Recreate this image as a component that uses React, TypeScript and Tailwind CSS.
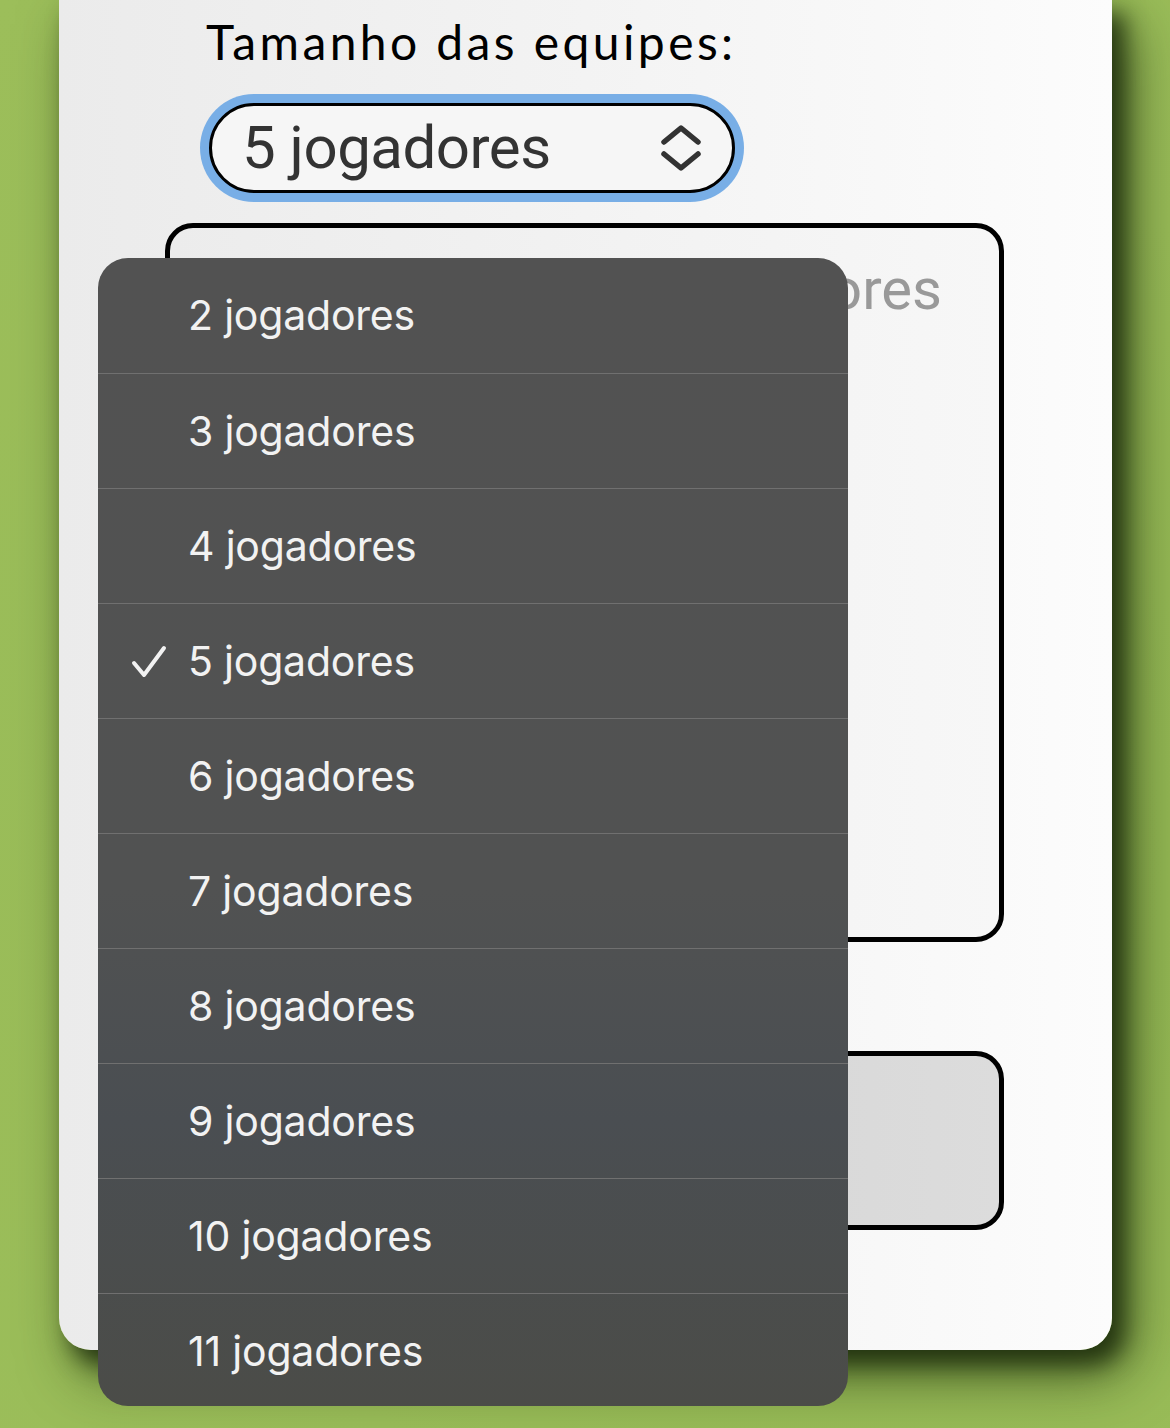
import React from "react";

const options = [2, 3, 4, 5, 6, 7, 8, 9, 10, 11];

function UpDown() {
  return (
    <svg width="42" height="50" viewBox="0 0 42 50" fill="none">
      <path d="M4 19 L21 5 L38 19" stroke="#333" strokeWidth="5.5" strokeLinecap="round" strokeLinejoin="round" />
      <path d="M4 31 L21 45 L38 31" stroke="#333" strokeWidth="5.5" strokeLinecap="round" strokeLinejoin="round" />
    </svg>
  );
}

function Check() {
  return (
    <svg width="36" height="36" viewBox="0 0 36 36" fill="none">
      <path d="M3 19 L13 31 L33 4" stroke="#f2f2f2" strokeWidth="4" strokeLinecap="round" strokeLinejoin="round" />
    </svg>
  );
}

export default function App() {
  return (
    <div className="relative w-[1170px] h-[1428px] overflow-hidden bg-[radial-gradient(ellipse_at_70%_60%,#8fb450_0%,#99bc58_60%,#9cbe5a_100%)]">
      <div className="ml-[59px] w-[1053px] h-[1350px] rounded-b-[32px] bg-[linear-gradient(to_right,#ebebeb,#f3f3f3_50%,#fcfcfc)] shadow-[12px_14px_22px_rgba(25,40,10,0.8),18px_24px_56px_rgba(25,40,10,0.65)] flex flex-col">
        <div
          className="pl-[147px] pt-[12px] text-[48px] leading-[60px] text-black tracking-[3.4px]"
          style={{ fontFamily: "Lato, 'Open Sans', sans-serif" }}
        >
          Tamanho das equipes:
        </div>
        <div className="ml-[141px] mt-[22px] w-[544px] h-[108px] rounded-full bg-[#78aee6] p-[9px]">
          <div className="w-full h-full rounded-full border-[3px] border-black bg-[#f6f6f6] flex items-center pl-[30px] pr-[30px] justify-between">
            <span
              className="text-[60px] leading-none text-[#333] tracking-[-0.5px]"
              style={{ fontFamily: "Roboto, Inter, sans-serif" }}
            >
              5 jogadores
            </span>
            <UpDown />
          </div>
        </div>
        <div className="ml-[106px] mt-[21px] w-[839px] h-[719px] rounded-[28px] border-[5px] border-black bg-[linear-gradient(to_right,#ececec,#f7f7f7)] flex justify-end pr-[57px] pt-[26px]">
          <span
            className="text-[58px] leading-[70px] text-[#999]"
            style={{ fontFamily: "Roboto, Inter, sans-serif" }}
          >
            Nomes dos jogadores
          </span>
        </div>
        <div className="ml-[106px] mt-[109px] w-[839px] h-[179px] rounded-[28px] border-[5px] border-black bg-[linear-gradient(to_right,#cfcfcf,#dcdcdc)]" />
      </div>

      <div className="absolute left-[98px] top-[258px] w-[750px] h-[1148px] rounded-[30px] overflow-hidden bg-[linear-gradient(to_bottom,#525252_0%,#515252_55%,#4a4e52_75%,#4b4c48_100%)] flex flex-col">
        {options.map((n, i) => (
          <div
            key={n}
            className={`relative h-[115px] shrink-0 flex items-center pl-[90px] ${i > 0 ? "border-t border-[#707070]" : ""}`}
          >
            {n === 5 && (
              <div className="absolute left-[33px] top-[40px]">
                <Check />
              </div>
            )}
            <span
              className="text-[41px] leading-none text-[#f2f2f2] tracking-[-0.2px]"
              style={{ fontFamily: "Inter, Roboto, sans-serif" }}
            >
              {n} jogadores
            </span>
          </div>
        ))}
      </div>
    </div>
  );
}
